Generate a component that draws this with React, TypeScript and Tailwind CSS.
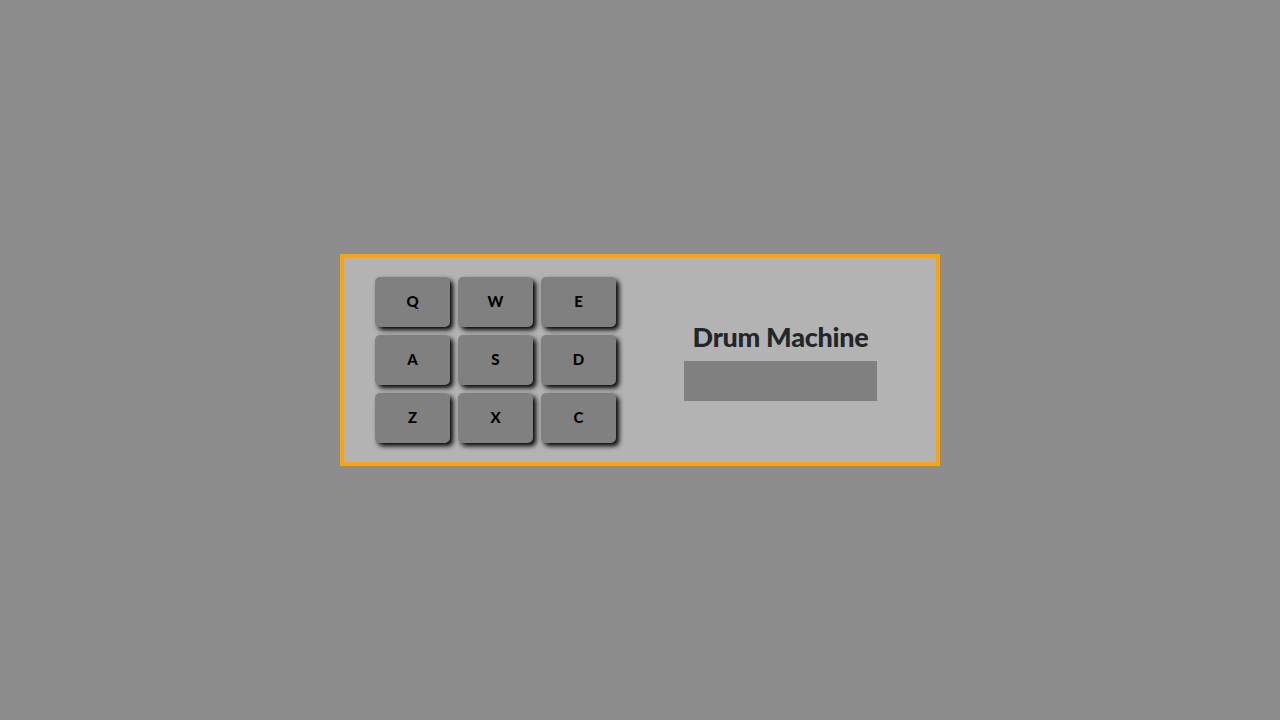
const pads = ['Q', 'W', 'E', 'A', 'S', 'D', 'Z', 'X', 'C'];

export default function App() {
	return (
		<div className="flex min-h-screen items-center justify-center bg-[#8d8d8d] font-['Lato',sans-serif]">
			<div className="flex h-[212px] w-[600px] items-center border-4 border-[#ffa500] bg-[#b3b3b3]">
				<div className="ml-[31px] grid grid-cols-[repeat(3,75px)] gap-2">
					{pads.map((key) => (
						<button
							key={key}
							type="button"
							className="flex h-[50px] w-[75px] items-center justify-center rounded-[5px] bg-[#808080] pb-[2px] text-[15px] font-black text-black shadow-[3px_3px_5px_#000]"
						>
							{key}
						</button>
					))}
				</div>
				<div className="ml-[68px] flex w-[193px] flex-col items-center pt-[2px]">
					<h1 className="text-[27px] leading-[31px] font-black tracking-[-0.3px] text-[#22252b]">Drum Machine</h1>
					<div className="mt-[9px] h-10 w-[193px] bg-[#808080]" />
				</div>
			</div>
		</div>
	);
}
